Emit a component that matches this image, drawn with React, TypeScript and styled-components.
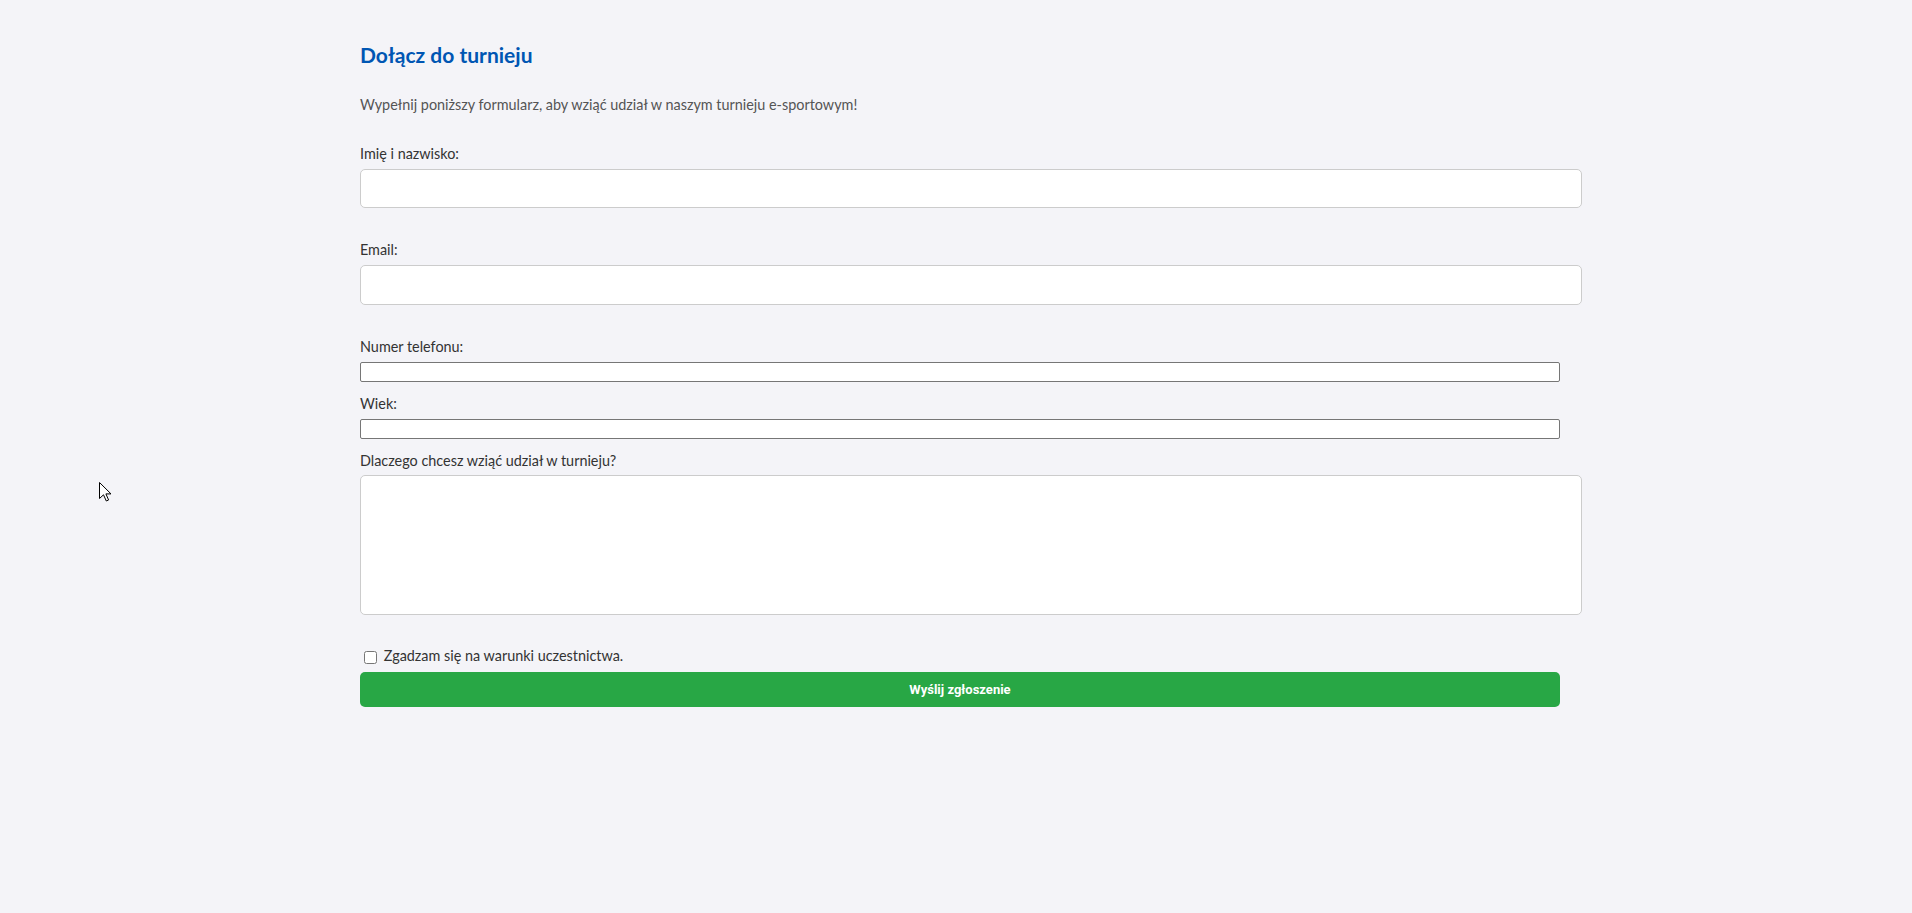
import * as React from "react";
import styled, { createGlobalStyle } from "styled-components";

const GlobalStyle = createGlobalStyle`
  html,
  body {
    margin: 0;
    background: #f4f4f8;
  }
  body {
    font-family: Lato, "Noto Sans", sans-serif;
    color: #333;
  }
`;

const Page = styled.div`
  min-height: 913px;
  padding: 42px 0 0 360px;
  box-sizing: border-box;
`;

const Container = styled.div`
  width: 1200px;
`;

const Title = styled.h2`
  margin: 0;
  font-size: 21px;
  line-height: 1.2;
  font-weight: 700;
  color: #0056b3;
`;

const Intro = styled.p`
  margin: 26.5px 0 16.5px;
  font-size: 14.4px;
  line-height: 21.6px;
  color: #555;
`;

const Form = styled.form`
  display: flex;
  flex-direction: column;
  align-items: stretch;
`;

const Label = styled.label`
  display: block;
  margin: 11px 0 4.4px;
  font-size: 14.4px;
  line-height: 21.6px;
  color: #333;
`;

const CheckLabel = styled(Label)`
  margin: 10px 0 5px;
`;

const Field = styled.input`
  display: block;
  box-sizing: border-box;
  width: calc(100% + 22px);
  height: 39.4px;
  margin: 0 0 20px;
  padding: 10px;
  border: 1px solid #ccc;
  border-radius: 5px;
  background: #fff;
  font-size: 14px;
`;

const PlainField = styled.input`
  display: block;
  box-sizing: border-box;
  width: 100%;
  height: 20px;
  margin: 0;
  padding: 1px 2px;
  border: 1px solid #767676;
  border-radius: 2px;
  background: #fff;
`;

const TextArea = styled.textarea`
  display: block;
  box-sizing: border-box;
  width: calc(100% + 22px);
  height: 140px;
  margin: 0 0 20px;
  padding: 10px;
  border: 1px solid #ccc;
  border-radius: 5px;
  background: #fff;
  resize: none;
`;

const Check = styled.input`
  width: 13px;
  height: 13px;
  margin: 3px 3px 3px 4px;
  vertical-align: -3px;
`;

const Submit = styled.button`
  display: block;
  width: 100%;
  height: 35px;
  border: none;
  border-radius: 5px;
  background: #28a745;
  color: #fff;
  font-family: Roboto, "Liberation Sans", sans-serif;
  font-size: 13px;
  font-weight: 700;
  cursor: pointer;
`;

const Pointer = styled.svg`
  position: fixed;
  left: 99px;
  top: 482px;
  pointer-events: none;
`;

export default function App() {
  return (
    <>
      <GlobalStyle />
      <Page>
        <Container>
          <Title>Dołącz do turnieju</Title>
          <Intro>Wypełnij poniższy formularz, aby wziąć udział w naszym turnieju e-sportowym!</Intro>
          <Form onSubmit={(e) => e.preventDefault()}>
            <Label htmlFor="name">Imię i nazwisko:</Label>
            <Field id="name" type="text" />
            <Label htmlFor="email">Email:</Label>
            <Field id="email" type="email" />
            <Label htmlFor="phone">Numer telefonu:</Label>
            <PlainField id="phone" type="tel" />
            <Label htmlFor="age">Wiek:</Label>
            <PlainField id="age" type="number" />
            <Label htmlFor="why">Dlaczego chcesz wziąć udział w turnieju?</Label>
            <TextArea id="why" />
            <CheckLabel>
              <Check type="checkbox" /> Zgadzam się na warunki uczestnictwa.
            </CheckLabel>
            <Submit type="submit">Wyślij zgłoszenie</Submit>
          </Form>
        </Container>
      </Page>
      <Pointer width="13" height="20" viewBox="0 0 13 20">
        <path d="M0.5 0.5 L0.5 16.5 L4.5 12.8 L7.3 19 L9.6 18 L6.9 11.9 L12 11.9 Z" fill="#fff" stroke="#000" strokeWidth="1" strokeLinejoin="miter" />
      </Pointer>
    </>
  );
}
